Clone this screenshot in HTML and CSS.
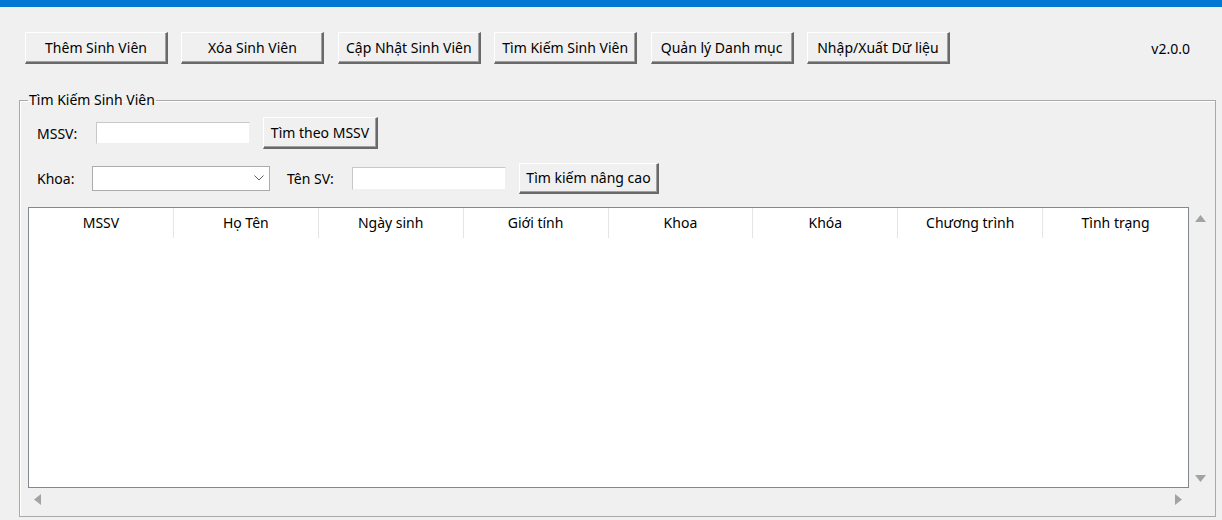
FILE: index.html
```html
<!DOCTYPE html>
<html lang="vi">
<head>
<meta charset="utf-8">
<title>Quản lý Sinh Viên</title>
<link rel="stylesheet" href="styles.css">
</head>
<body>
<div class="titlebar"></div>
<div class="toolbar">
  <button class="btn tb">Thêm Sinh Viên</button>
  <button class="btn tb">Xóa Sinh Viên</button>
  <button class="btn tb">Cập Nhật Sinh Viên</button>
  <button class="btn tb">Tìm Kiếm Sinh Viên</button>
  <button class="btn tb">Quản lý Danh mục</button>
  <button class="btn tb">Nhập/Xuất Dữ liệu</button>
  <span class="version">v2.0.0</span>
</div>
<fieldset class="group">
  <legend class="group-title">Tìm Kiếm Sinh Viên</legend>
  <div class="row row1">
    <label class="lbl lbl-mssv">MSSV:</label>
    <input class="entry entry-mssv" type="text">
    <button class="btn btn-mssv">Tìm theo MSSV</button>
  </div>
  <div class="row row2">
    <label class="lbl lbl-khoa">Khoa:</label>
    <div class="combo"><svg class="chev" width="10" height="6" viewBox="0 0 10 6"><path d="M0.5 0.5 L5 5 L9.5 0.5" fill="none" stroke="#606060" stroke-width="1"/></svg></div>
    <label class="lbl lbl-ten">Tên SV:</label>
    <input class="entry entry-ten" type="text">
    <button class="btn btn-adv">Tìm kiếm nâng cao</button>
  </div>
  <div class="tablewrap">
    <div class="table">
      <div class="thead">
        <div class="th">MSSV</div>
        <div class="th">Họ Tên</div>
        <div class="th">Ngày sinh</div>
        <div class="th">Giới tính</div>
        <div class="th">Khoa</div>
        <div class="th">Khóa</div>
        <div class="th">Chương trình</div>
        <div class="th">Tình trạng</div>
      </div>
    </div>
    <div class="vscroll">
      <svg width="11" height="7" viewBox="0 0 11 7"><path d="M0 7 L5.5 0 L11 7 Z" fill="#a3a3a3"/></svg>
      <svg width="11" height="7" viewBox="0 0 11 7"><path d="M0 0 L11 0 L5.5 7 Z" fill="#a3a3a3"/></svg>
    </div>
    <div class="hscroll">
      <svg width="7" height="11" viewBox="0 0 7 11"><path d="M7 0 L7 11 L0 5.5 Z" fill="#a3a3a3"/></svg>
      <svg width="7" height="11" viewBox="0 0 7 11"><path d="M0 0 L7 5.5 L0 11 Z" fill="#a3a3a3"/></svg>
    </div>
    <div class="corner"></div>
  </div>
</fieldset>
</body>
</html>
```

FILE: styles.css
```css
html, body {
  margin: 0;
  padding: 0;
}
body {
  width: 1222px;
  height: 520px;
  overflow: hidden;
  background: #f0f0f0;
  font-family: "Noto Sans", "Open Sans", "DejaVu Sans", sans-serif;
  font-size: 14px;
  color: #000;
}
.titlebar {
  height: 7px;
  background: #0078d4;
}
.toolbar {
  display: flex;
  align-items: center;
  gap: 13.4px;
  padding: 25px 0 0 25px;
  height: 32px;
}
.btn {
  box-sizing: border-box;
  font-family: inherit;
  font-size: 14px;
  color: #000;
  background: #f0f0f0;
  border-style: solid;
  border-width: 1px 2px 2px 1px;
  border-color: #ffffff #696969 #696969 #ffffff;
  box-shadow: inset -1px -1px 0 #a0a0a0;
  padding: 0;
  margin: 0;
  height: 32px;
  line-height: 1;
}
.tb {
  width: 143px;
}
.version {
  margin-left: auto;
  margin-right: 32px;
}
.group {
  margin: 28px 6px 0 19px;
  padding: 9px 3px 6px 8px;
  border: 1px solid #a9a9a9;
  box-shadow: 1px 1px 0 #ffffff inset;
  min-width: 0;
}
.group-title {
  padding: 0 1px;
  margin-left: 0;
  line-height: 16px;
  height: 16px;
}
.row {
  display: flex;
  align-items: center;
  height: 32px;
  padding-left: 9px;
}
.row2 {
  margin-top: 13px;
}
.lbl {
  display: block;
  flex: none;
}
.lbl-mssv {
  width: 59px;
}
.lbl-khoa {
  width: 55px;
}
.lbl-ten {
  width: 65px;
  margin-left: 17px;
}
.entry {
  box-sizing: border-box;
  height: 22px;
  width: 154px;
  background: #fff;
  border-style: solid;
  border-width: 1px;
  border-color: #c8c8c8 #f0f0f0 #f0f0f0 #c8c8c8;
  padding: 0 3px;
  margin: 0;
  font-family: inherit;
  font-size: 14px;
}
.btn-mssv {
  width: 115px;
  margin-left: 13px;
}
.combo {
  box-sizing: border-box;
  width: 178px;
  height: 25px;
  background: #fff;
  border: 1px solid #acacac;
  display: flex;
  align-items: center;
  justify-content: flex-end;
  padding-right: 5px;
}
.entry-ten {
  height: 23px;
}
.btn-adv {
  width: 140px;
  height: 31px;
  margin-left: 13px;
}
.tablewrap {
  margin-top: 13px;
  display: grid;
  grid-template-columns: 1fr 23px;
  grid-template-rows: 281px 22px;
  height: 303px;
}
.table {
  background: #fff;
  border: 1px solid #828790;
  overflow: hidden;
}
.thead {
  display: grid;
  grid-template-columns: repeat(8, 1fr);
  height: 30px;
}
.th {
  display: flex;
  align-items: center;
  justify-content: center;
  border-right: 1px solid #e5e5e5;
  font-size: 14px;
  color: #000;
  padding-bottom: 2px;
}
.th:last-child {
  border-right: none;
}
.vscroll {
  display: flex;
  flex-direction: column;
  justify-content: space-between;
  align-items: center;
  padding: 8px 0 6px 0;
}
.hscroll {
  display: flex;
  justify-content: space-between;
  align-items: center;
  padding: 0 7px 0 6px;
}
.corner {
  background: #f0f0f0;
}
```
